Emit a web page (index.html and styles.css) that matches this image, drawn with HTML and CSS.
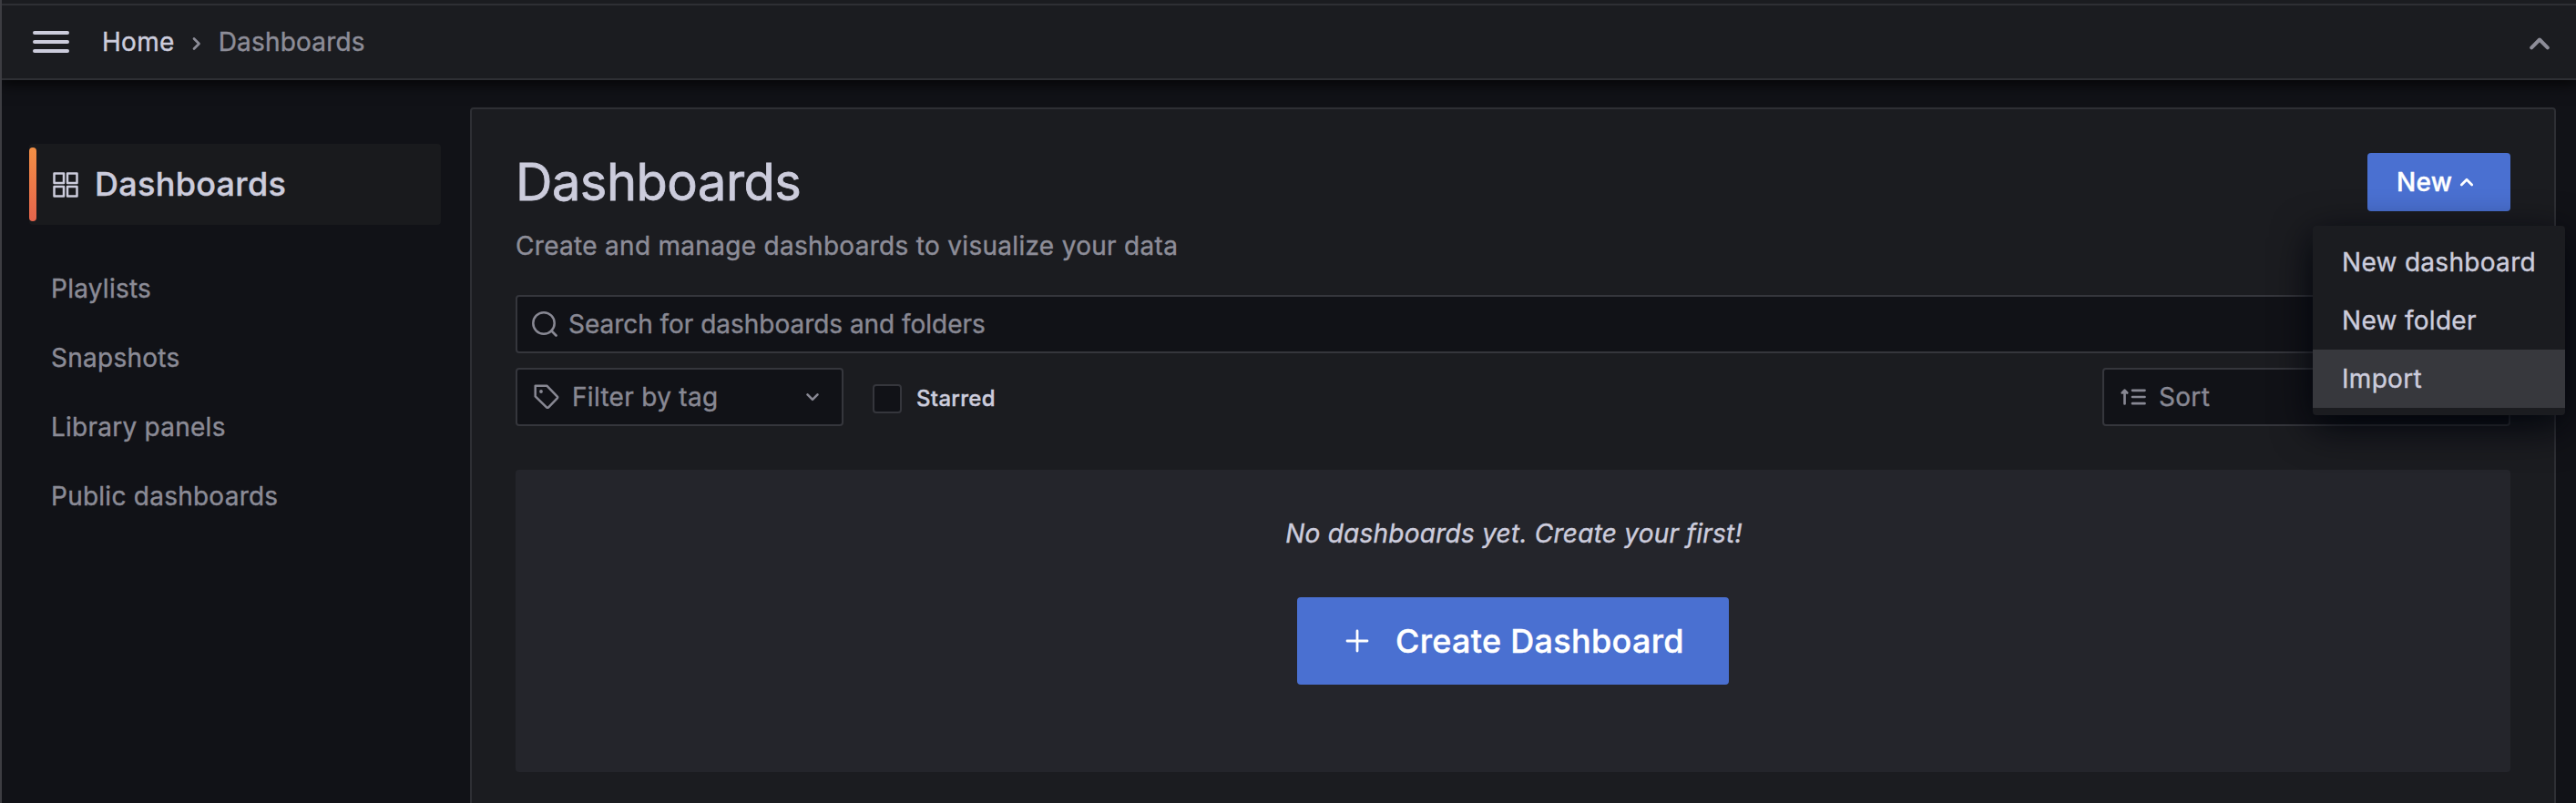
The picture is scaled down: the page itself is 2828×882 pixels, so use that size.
FILE: index.html
```html
<!DOCTYPE html>
<html lang="en">
<head>
<meta charset="utf-8">
<title>Dashboards</title>
<link rel="stylesheet" href="styles.css">
</head>
<body>
<div class="app">
  <header class="topbar">
    <svg class="burger" width="40" height="24" viewBox="0 0 40 24"><path d="M2 2H38M2 12H38M2 22H38" stroke-width="4"/></svg>
    <nav class="crumbs">
      <a class="crumb-home">Home</a>
      <svg class="crumb-sep" width="10" height="16" viewBox="0 0 10 16"><path d="M2 2.500L7.500 8L2 13.500" stroke-width="2.700"/></svg>
      <span class="crumb-current">Dashboards</span>
    </nav>
    <svg class="collapse" width="22" height="14" viewBox="0 0 22 14"><path d="M2.200 11.300L11 2.500L19.800 11.300" stroke-width="4"/></svg>
  </header>
  <div class="body">
    <aside class="sidebar">
      <a class="nav-active">
        <span class="nav-bar"></span>
        <svg class="nav-icon" width="28" height="28" viewBox="0 0 28 28"><path d="M1.500 1.500H12V12H1.500ZM16 1.500H26.500V12H16ZM1.500 16H12V26.500H1.500ZM16 16H26.500V26.500H16Z" stroke-width="2.500"/></svg>
        <span class="nav-title">Dashboards</span>
      </a>
      <nav class="nav-list">
        <a>Playlists</a>
        <a>Snapshots</a>
        <a>Library panels</a>
        <a>Public dashboards</a>
      </nav>
    </aside>
    <main class="panel">
      <div class="page-head">
        <h1>Dashboards</h1>
        <div class="new-wrap">
          <button class="btn btn-new">New <svg width="16" height="12" viewBox="0 0 16 12"><path d="M2.300 9L8 3.300L13.700 9" stroke-width="2.800"/></svg></button>
          <div class="menu">
            <a>New dashboard</a>
            <a>New folder</a>
            <a class="hover">Import</a>
          </div>
        </div>
      </div>
      <p class="subtitle">Create and manage dashboards to visualize your data</p>
      <div class="field search">
        <svg width="28" height="28" viewBox="0 0 28 28"><circle cx="13" cy="13" r="11.700" stroke-width="2.500"/><path d="M21.300 21.300L26.500 26.500" stroke-width="2.700"/></svg>
        <span>Search for dashboards and folders</span>
      </div>
      <div class="filters">
        <div class="field tag">
          <svg width="28" height="28" viewBox="0 0 28 28"><path d="M1.700 1.700H14.300L25.800 13.600Q26.600 14.500 25.800 15.400L16.200 25.300Q15.100 26.400 14 25.300L1.700 13.400Z" stroke-width="2.500"/><circle cx="8" cy="8" r="1" stroke-width="1.800"/></svg>
          <span>Filter by tag</span>
          <svg class="chev" width="16" height="12" viewBox="0 0 16 12"><path d="M2.500 3.300L8 8.800L13.500 3.300" stroke-width="2.600"/></svg>
        </div>
        <span class="checkbox"></span>
        <span class="starred">Starred</span>
        <div class="field sort">
          <svg width="28" height="20" viewBox="0 0 28 20"><path d="M4.500 17.500V4M1.800 5.500L4.500 2.800L7.200 5.500M13 2.800H26.500M13 10H26.500M13 17.200H26.500" stroke-width="2.700"/></svg>
          <span>Sort</span>
        </div>
      </div>
      <section class="empty">
        <p>No dashboards yet. Create your first!</p>
        <button class="btn btn-create"><svg width="26" height="26" viewBox="0 0 26 26"><path d="M13 2V24M2 13H24" stroke-width="2.800"/></svg>Create Dashboard</button>
      </section>
    </main>
  </div>
</div>
</body>
</html>
```
FILE: styles.css
```css
* { box-sizing: border-box; }
body {
  margin: 0;
  background: #111217;
  color: #ccccdc;
  font: 400 28px/44px Inter, sans-serif;
  letter-spacing: 0.3px;
  -webkit-text-stroke: 0.4px currentColor;
}
h1, p { margin: 0; font-weight: 400; }
svg { flex: none; fill: none; stroke: currentColor; stroke-linecap: round; stroke-linejoin: round; }
.app {
  height: 882px;
  overflow: hidden;
  display: flex;
  flex-direction: column;
  border-left: 2px solid #3d3d42;
}
.topbar {
  position: relative;
  height: 88px;
  flex: none;
  display: flex;
  align-items: center;
  padding: 0 29px 0 34px;
  background: linear-gradient(#1b1c20 4px, #2e2f34 4px, #2e2f34 6px, #1b1c20 6px);
  border-bottom: 2px solid #2e2f34;
  box-shadow: 0 2px 16px 2px #000000d0;
}
.burger { margin-top: 6px; }
.crumbs { display: flex; align-items: center; margin: 5px 0 0 36px; }
.crumb-sep { margin: 4px 19px 0 19px; color: #8d8d98; }
.crumb-current { color: #8d8d98; letter-spacing: 0.2px; }
.collapse { margin: 10px 0 0 auto; color: #8d8d98; }
.body { flex: 1; display: flex; min-height: 0; }
.sidebar { width: 514px; flex: none; padding: 70px 32px 0 30px; }
.nav-active {
  height: 89px;
  display: flex;
  align-items: center;
  background: #191a1d;
  border-radius: 4px;
  font-size: 36px;
  font-weight: 500;
  letter-spacing: 0.3px;
}
.nav-bar { width: 8px; height: 81px; border-radius: 4px; background: linear-gradient(#f28f45, #e5644c); }
.nav-icon { margin: 0 18px; }
.nav-title { margin-bottom: 2px; }
.nav-list { display: flex; flex-direction: column; gap: 32px; padding: 48px 0 0 24px; color: #8b8b96; letter-spacing: 0.25px; }
.panel {
  width: 2290px;
  height: 800px;
  margin-top: 30px;
  padding: 48px 48px 0;
  border: 2px solid #2e2f34;
  border-radius: 4px;
  background: #1b1c20;
}
.page-head { height: 64px; display: flex; justify-content: space-between; align-items: center; }
h1 { font-size: 56px; line-height: 64px; letter-spacing: -0.5px; -webkit-text-stroke-width: 0.8px; }
.btn {
  border: 0;
  border-radius: 4px;
  background: #4a70d1;
  color: #fff;
  font: 500 28px/44px Inter, sans-serif;
  letter-spacing: 0.3px;
  display: flex;
  align-items: center;
}
.new-wrap { position: relative; }
.btn-new { width: 157px; height: 64px; padding: 0 0 0 32px; gap: 8px; }
.menu {
  position: absolute;
  z-index: 2;
  top: 80px;
  right: -60px;
  width: 277px;
  height: 208px;
  padding: 8px 0;
  border-radius: 4px;
  background: #1b1c20;
  box-shadow: 0 12px 44px #01040b;
}
.menu a { display: block; height: 64px; line-height: 64px; padding-left: 32px; }
.menu .hover { background: #37383d; }
.subtitle { margin-top: 16px; color: #8d8d98; }
.field {
  height: 64px;
  display: flex;
  align-items: center;
  background: #111217;
  border: 2px solid #35363c;
  border-radius: 4px;
  color: #888893;
}
.search { margin-top: 32px; padding-left: 16px; gap: 12px; letter-spacing: -0.03px; }
.filters { display: flex; align-items: center; margin-top: 16px; }
.tag { width: 360px; padding: 0 24px 0 18px; gap: 14px; }
.chev { margin-left: auto; }
.checkbox { width: 32px; height: 32px; margin: 4px 16px 0 32px; background: #111217; border: 2px solid #35363c; border-radius: 4px; }
.starred { font-size: 24px; font-weight: 500; margin-top: 3px; }
.sort { width: 448px; margin-left: auto; padding-left: 18px; gap: 14px; }
.empty {
  height: 332px;
  margin-top: 48px;
  padding-top: 48px;
  display: flex;
  flex-direction: column;
  align-items: center;
  background: #24252b;
  border-radius: 4px;
}
.empty p { font-style: italic; letter-spacing: 0.25px; padding-left: 2px; }
.btn-create { width: 474px; height: 96px; margin-top: 48px; padding: 0 0 0 53px; gap: 29px; font-size: 36px; }
```
